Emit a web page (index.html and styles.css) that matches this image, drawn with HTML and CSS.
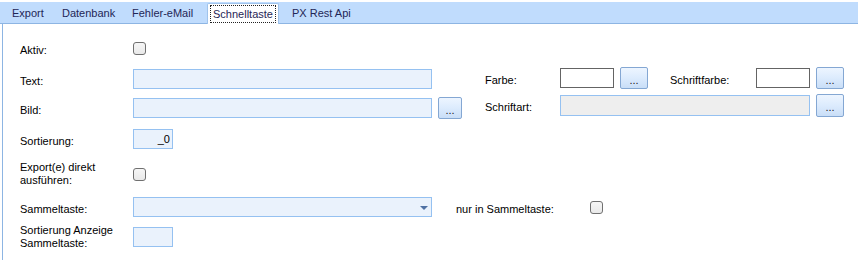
FILE: index.html
```html
<!DOCTYPE html>
<html lang="de">
<head>
    <meta charset="UTF-8">
    <title>Einstellungen - Schnelltaste</title>
    <link rel="stylesheet" href="styles.css">
</head>
<body>

<div class="tabs">
    <div class="tab tab-export">Export</div>
    <div class="tab tab-db">Datenbank</div>
    <div class="tab tab-mail">Fehler-eMail</div>
    <div class="tab tab-quick active"><span class="focus">Schnelltaste</span></div>
    <div class="tab tab-api">PX Rest Api</div>
</div>

<div class="panel">
    <div class="col-left">
        <div class="row row-aktiv">
            <label class="lbl">Aktiv:</label>
            <input type="checkbox" class="chk">
        </div>
        <div class="row row-text">
            <label class="lbl">Text:</label>
            <input type="text" class="field field-wide">
        </div>
        <div class="row row-bild">
            <label class="lbl">Bild:</label>
            <input type="text" class="field field-wide">
            <button class="btn btn-small">...</button>
        </div>
        <div class="row row-sort">
            <label class="lbl">Sortierung:</label>
            <input type="text" class="field field-num" value="_0">
        </div>
        <div class="row row-export">
            <label class="lbl lbl-multi">Export(e) direkt<br>ausführen:</label>
            <input type="checkbox" class="chk">
        </div>
        <div class="row row-sammel">
            <label class="lbl">Sammeltaste:</label>
            <div class="combo"><span class="arrow"></span></div>
            <label class="lbl lbl-only">nur in Sammeltaste:</label>
            <input type="checkbox" class="chk">
        </div>
        <div class="row row-anzeige">
            <label class="lbl lbl-multi">Sortierung Anzeige<br>Sammeltaste:</label>
            <input type="text" class="field field-num">
        </div>
    </div>

    <div class="col-right">
        <div class="row row-farbe">
            <label class="lbl lbl-r">Farbe:</label>
            <div class="swatch"></div>
            <button class="btn">...</button>
            <label class="lbl lbl-sf">Schriftfarbe:</label>
            <div class="swatch"></div>
            <button class="btn">...</button>
        </div>
        <div class="row row-font">
            <label class="lbl lbl-r">Schriftart:</label>
            <input type="text" class="field field-font" disabled>
            <button class="btn">...</button>
        </div>
    </div>
</div>

</body>
</html>
```

FILE: styles.css
```css
* {
    margin: 0;
    padding: 0;
    box-sizing: border-box;
}

body {
    font-family: "Liberation Sans", Arial, sans-serif;
    font-size: 11px;
    line-height: 13px;
    color: #000;
    background: #fff;
    height: 260px;
    overflow: hidden;
}

/* tab strip */

.tabs {
    display: flex;
    margin-top: 2px;
    height: 22px;
    background: #c0dcfd;
    border-bottom: 1px solid #8db5e3;
    padding-left: 4px;
}

.tab {
    height: 21px;
    padding-top: 5px;
    padding-left: 8px;
    color: #1f2656;
    white-space: nowrap;
}

.tab-export { width: 50px; }
.tab-db { width: 70px; }
.tab-mail { width: 83px; }
.tab-api { width: 90px; padding-left: 13px; }

.tab.active {
    width: 72px;
    height: 21px;
    margin-top: 1px;
    padding: 1px 0 0 2px;
    background: #fff;
    border: 1px solid #9fc3ec;
    border-bottom: none;
    border-radius: 2px 2px 0 0;
}

.focus {
    display: inline-block;
    padding: 1px 2px;
    line-height: 14px;
    border: 1px dotted #222;
}

/* panel */

.panel {
    display: flex;
    margin-left: 2px;
    height: 236px;
    border-left: 1px solid #8db5e3;
}

.col-left {
    flex: 0 0 482px;
    min-width: 0;
    padding: 13px 0 0 17px;
}

.col-right {
    flex: 1;
    min-width: 0;
    padding-top: 43px;
}

.row {
    display: flex;
    align-items: center;
    height: 22px;
}

.row-text { margin-top: 9px; }
.row-bild { margin-top: 7px; }
.row-sort { margin-top: 9px; }
.row-export { margin-top: 10px; height: 28px; }
.row-sammel { margin-top: 8px; }
.row-anzeige { margin-top: 6px; height: 26px; }

.row-font { margin-top: 5px; height: 23px; }

.lbl {
    flex: none;
    width: 113px;
    padding-top: 4px;
    white-space: nowrap;
}

.lbl-multi {
    padding-top: 0;
}

.lbl-only {
    width: 134px;
    margin-left: 24px;
}

.lbl-r { width: 75px; }
.lbl-sf { width: 86px; margin-left: 22px; }

/* controls */

.chk {
    flex: none;
    appearance: none;
    -webkit-appearance: none;
    width: 13px;
    height: 13px;
    border: 1px solid #707070;
    border-radius: 3px;
    background: linear-gradient(#f6f6f6, #e9e9e9);
}

.field {
    flex: none;
    height: 20px;
    padding: 0 2px;
    border: 1px solid #95c1f1;
    background: #eaf2fc;
    font-family: inherit;
    font-size: 11px;
    color: #000;
    outline: none;
}

.field-wide { width: 299px; }

.field-num {
    width: 40px;
    text-align: right;
}

.field-font {
    width: 250px;
    height: 21px;
    background: #eeeeee;
}

.combo {
    flex: none;
    display: flex;
    align-items: center;
    justify-content: flex-end;
    width: 299px;
    height: 20px;
    padding-right: 3px;
    border: 1px solid #95c1f1;
    background: #eaf2fc;
}

.arrow {
    width: 0;
    height: 0;
    margin-top: 2px;
    border-left: 4px solid transparent;
    border-right: 4px solid transparent;
    border-top: 4px solid #4f71a3;
}

.swatch {
    flex: none;
    width: 54px;
    height: 20px;
    border: 1px solid #646464;
    background: #fff;
}

.btn {
    flex: none;
    width: 28px;
    height: 22px;
    margin-left: 6px;
    padding-top: 3px;
    border: 1px solid #84a7d3;
    border-radius: 2px;
    background: linear-gradient(#edf5ff 0%, #dcebfd 50%, #c9def7 100%);
    font-family: inherit;
    font-size: 11px;
    color: #222;
}

.row-font .btn { height: 23px; }

.btn-small { width: 24px; }
```
